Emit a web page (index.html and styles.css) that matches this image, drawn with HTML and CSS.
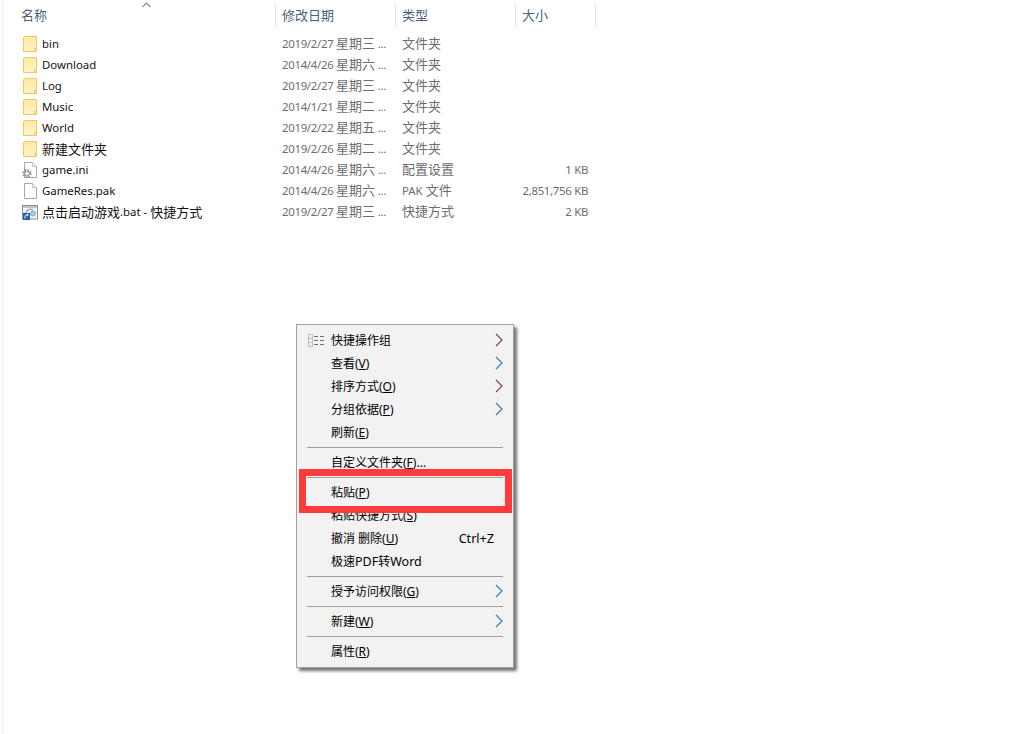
FILE: index.html
```html
<!DOCTYPE html>
<html lang="zh-CN">
<head>
<meta charset="utf-8">
<title>文件夹</title>
<link rel="stylesheet" href="styles.css">
</head>
<body>
<svg class="defs" width="0" height="0" aria-hidden="true">
  <defs>
    <linearGradient id="fg" x1="0" y1="0" x2="0" y2="1"><stop offset="0" stop-color="#fee9a4"/><stop offset="1" stop-color="#fff2c6"/></linearGradient>
    <symbol id="folder" viewBox="0 0 16 16">
      <path d="M2.500.5h12v15h-13V1.500z" fill="url(#fg)" stroke="#eecb62"/>
      <path d="M12.500 15.500v-3h2v3z" fill="#fde9a6" stroke="#eecb62"/>
    </symbol>
    <symbol id="doc" viewBox="0 0 16 16">
      <path d="M2.500.5h8l4 4v11h-12z" fill="#fdfdfd" stroke="#a8a8a8"/>
      <path d="M10.500.5v4h4" fill="#f3f3f3" stroke="#c4c4c4"/>
    </symbol>
    <symbol id="chev" viewBox="0 0 8 14">
      <path d="M1 1l6 6-6 6" fill="none" stroke="currentColor" stroke-width="1.1"/>
    </symbol>
  </defs>
</svg>

<main class="window">
  <div class="cols head">
    <div class="hcell name-head">名称
      <svg class="sort" width="9" height="6" viewBox="0 0 9 6"><path d="M.5 5l4-4 4 4" fill="none" stroke="#8a8a8a" stroke-width="1.1"/></svg>
    </div>
    <div class="hcell">修改日期</div>
    <div class="hcell">类型</div>
    <div class="hcell last">大小</div>
  </div>

  <div class="list">
    <div class="cols row"><div class="name"><svg class="ic"><use href="#folder"/></svg>bin</div><div class="cell">2019/2/27 <span class="zh">星期三</span> ...</div><div class="cell"><span class="zh">文件夹</span></div><div class="size"></div></div>
    <div class="cols row"><div class="name"><svg class="ic"><use href="#folder"/></svg>Download</div><div class="cell">2014/4/26 <span class="zh">星期六</span> ...</div><div class="cell"><span class="zh">文件夹</span></div><div class="size"></div></div>
    <div class="cols row"><div class="name"><svg class="ic"><use href="#folder"/></svg>Log</div><div class="cell">2019/2/27 <span class="zh">星期三</span> ...</div><div class="cell"><span class="zh">文件夹</span></div><div class="size"></div></div>
    <div class="cols row"><div class="name"><svg class="ic"><use href="#folder"/></svg>Music</div><div class="cell">2014/1/21 <span class="zh">星期二</span> ...</div><div class="cell"><span class="zh">文件夹</span></div><div class="size"></div></div>
    <div class="cols row"><div class="name"><svg class="ic"><use href="#folder"/></svg>World</div><div class="cell">2019/2/22 <span class="zh">星期五</span> ...</div><div class="cell"><span class="zh">文件夹</span></div><div class="size"></div></div>
    <div class="cols row"><div class="name"><svg class="ic"><use href="#folder"/></svg><span class="zh">新建文件夹</span></div><div class="cell">2019/2/26 <span class="zh">星期二</span> ...</div><div class="cell"><span class="zh">文件夹</span></div><div class="size"></div></div>
    <div class="cols row"><div class="name"><svg class="ic" viewBox="0 0 16 16"><use href="#doc"/><circle cx="5" cy="11.500" r="3.800" fill="none" stroke="#8c8c8c" stroke-width="1.600" stroke-dasharray="1.500 1.500"/><circle cx="5" cy="11.500" r="2.600" fill="#dcdcdc" stroke="#7d7d7d" stroke-width=".8"/><circle cx="5" cy="11.500" r="1" fill="#fff"/></svg>game.ini</div><div class="cell">2014/4/26 <span class="zh">星期六</span> ...</div><div class="cell"><span class="zh">配置设置</span></div><div class="size">1 KB</div></div>
    <div class="cols row"><div class="name"><svg class="ic"><use href="#doc"/></svg>GameRes.pak</div><div class="cell">2014/4/26 <span class="zh">星期六</span> ...</div><div class="cell">PAK <span class="zh">文件</span></div><div class="size">2,851,756 KB</div></div>
    <div class="cols row"><div class="name"><svg class="ic" viewBox="0 0 16 16"><rect x=".5" y="1.500" width="15" height="13.500" fill="#f2f5f8" stroke="#8f8f8f"/><rect x="1" y="2" width="14" height="2" fill="#b5c3d2"/><path d="M4 9a4.500 4.500 0 0 1 7-3" fill="none" stroke="#8aa0b5" stroke-width="1.400"/><circle cx="11" cy="9.500" r="2.500" fill="#a9cdea" stroke="#5f8db5" stroke-width=".7"/><rect x="1" y="9" width="7" height="7" fill="#1f5fa8"/><path d="M3 14.500v-2a1.500 1.500 0 0 1 1.500-1.500H6M5 9.800L6.300 11 5 12.200" fill="none" stroke="#fff"/></svg><span class="zh">点击启动游戏</span>.bat - <span class="zh">快捷方式</span></div><div class="cell">2019/2/27 <span class="zh">星期三</span> ...</div><div class="cell"><span class="zh">快捷方式</span></div><div class="size">2 KB</div></div>
  </div>
</main>

<nav class="menu">
  <div class="mi">
    <svg class="mi-ic" width="17" height="13" viewBox="0 0 17 13"><path d="M.5.500h4v12h-4zM.5 4.500h4M.5 8.500h4" fill="none" stroke="#8a8a8a" stroke-dasharray="1 1"/><path d="M6 2.500h4M12 2.500h4M6 6.500h4M12 6.500h4M6 10.500h4M12 10.500h4" stroke="#6f6f6f"/></svg>
    <span class="lb">快捷操作组</span>
    <svg class="ar warm"><use href="#chev"/></svg>
  </div>
  <div class="mi"><span class="lb">查看(<u>V</u>)</span><svg class="ar cool"><use href="#chev"/></svg></div>
  <div class="mi"><span class="lb">排序方式(<u>O</u>)</span><svg class="ar warm"><use href="#chev"/></svg></div>
  <div class="mi"><span class="lb">分组依据(<u>P</u>)</span><svg class="ar cool"><use href="#chev"/></svg></div>
  <div class="mi"><span class="lb">刷新(<u>E</u>)</span></div>
  <div class="sep"></div>
  <div class="mi"><span class="lb">自定义文件夹(<u>F</u>)...</span></div>
  <div class="sep"></div>
  <div class="mi"><span class="lb">粘贴(<u>P</u>)</span></div>
  <div class="mi"><span class="lb">粘贴快捷方式(<u>S</u>)</span></div>
  <div class="mi"><span class="lb">撤消 删除(<u>U</u>)</span><span class="key">Ctrl+Z</span></div>
  <div class="mi"><span class="lb">极速<span class="lat">PDF</span>转<span class="lat">Word</span></span></div>
  <div class="sep"></div>
  <div class="mi"><span class="lb">授予访问权限(<u>G</u>)</span><svg class="ar cool"><use href="#chev"/></svg></div>
  <div class="sep"></div>
  <div class="mi"><span class="lb">新建(<u>W</u>)</span><svg class="ar cool"><use href="#chev"/></svg></div>
  <div class="sep"></div>
  <div class="mi"><span class="lb">属性(<u>R</u>)</span></div>
</nav>
<div class="highlight"></div>
</body>
</html>
```

FILE: styles.css
```css
html, body {
  margin: 0;
  height: 100%;
  overflow: hidden;
  background: #fff;
}
body {
  font-family: "Noto Sans", "Noto Sans CJK SC", sans-serif;
  font-size: 12px;
  color: #111;
}
.defs { position: absolute; }

.window {
  margin-left: 2px;
  height: 100%;
  padding-top: 3px;
  box-sizing: border-box;
  border-left: 1px solid #f1f1f1;
}
.cols {
  display: grid;
  grid-template-columns: 272px 120px 120px 81px;
}
.head { height: 25px; }
.hcell {
  border-left: 1px solid #e5e5e5;
  padding: 3px 0 0 6px;
  font-size: 13px;
  color: #4c607a;
  line-height: 18px;
}
.hcell.last { border-right: 1px solid #e5e5e5; }
.name-head {
  border-left: 0;
  padding-left: 18px;
  position: relative;
}
.sort { position: absolute; left: 139px; top: -1px; }

.list { padding-top: 6px; }
.row { height: 21px; line-height: 20px; }
.zh { font-size: 13px; line-height: 1; }
.name {
  display: flex;
  align-items: flex-start;
  padding-left: 19px;
  font-size: 11.4px;
  color: #111;
  white-space: pre;
}
.ic { width: 16px; height: 16px; margin: 2px 4px 0 0; flex: none; }
.name .zh { line-height: 20px; }
.cell {
  padding-left: 7px;
  font-size: 11.4px;
  color: #6d6d6d;
  white-space: nowrap;
}
.cell:nth-child(2) { letter-spacing: -.3px; }
.cell:nth-child(2) .zh { letter-spacing: 0; }
.size {
  text-align: right;
  padding-right: 8px;
  font-size: 11.4px;
  letter-spacing: -.3px;
  color: #6d6d6d;
  white-space: nowrap;
}

.menu {
  position: absolute;
  left: 296px;
  top: 324px;
  width: 216px;
  padding: 4px 0;
  background: #f2f2f2;
  border: 1px solid #a0a0a0;
  box-shadow: 3px 3px 3px rgba(0, 0, 0, .55);
  color: #000;
}
.mi {
  display: grid;
  grid-template-columns: 24px 1fr auto;
  align-items: center;
  height: 23px;
  padding: 0 10px;
  line-height: 23px;
}
.lb { grid-column: 2; white-space: nowrap; }
.lat { font-size: 12.5px; }
.mi-ic { grid-column: 1; grid-row: 1; margin-left: 1px; }
.key { grid-column: 3; margin-right: 9px; font-size: 12.6px; }
.ar { grid-column: 3; width: 8px; height: 14px; margin-top: -1px; }
.warm { color: #7d4040; }
.cool { color: #2f78ad; }
.sep {
  height: 1px;
  margin: 3px 10px;
  background: #a0a0a0;
}

.highlight {
  position: absolute;
  left: 299px;
  top: 469px;
  width: 199px;
  height: 30px;
  border: 7px solid #ff3b3b;
}
```
